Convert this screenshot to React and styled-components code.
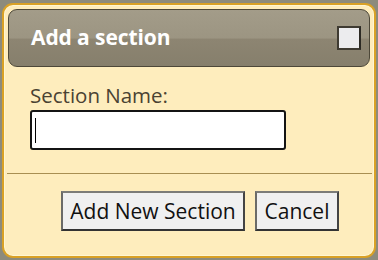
import React from "react";
import styled, { createGlobalStyle } from "styled-components";

const Global = createGlobalStyle`
  html, body { margin: 0; padding: 0; background: #8d8b7c; }
  body { width: 378px; height: 260px; overflow: hidden; font-family: "Open Sans", "Noto Sans", sans-serif; }
  #root { padding: 3px 2px 0 2px; }
`;

const Dialog = styled.div`
  box-sizing: border-box;
  width: 374px;
  height: 255px;
  border: 2px solid #d9a126;
  border-radius: 11px;
  background: #feedbd;
  box-shadow: inset 0 0 0 1px #fff6d2;
  padding: 4px 4px 0 4px;
  display: flex;
  flex-direction: column;
`;

const Header = styled.div`
  box-sizing: border-box;
  height: 58px;
  border: 1px solid #4d4839;
  border-radius: 9px;
  background: linear-gradient(to bottom, #a39c89 0%, #9c9582 50%, #8d8572 52%, #867f6c 100%);
  display: flex;
  align-items: center;
  justify-content: space-between;
  padding: 0 8px 0 22px;
`;

const Title = styled.div`
  color: #ffffff;
  font-weight: 700;
  font-size: 21px;
  letter-spacing: -0.1px;
  margin-top: -2px;
`;

const CloseBox = styled.div`
  box-sizing: border-box;
  width: 24px;
  height: 24px;
  background: #ececee;
  border: 2px solid #3f3b32;
  border-right-color: #2c2a24;
  margin-top: -1px;
`;

const Body = styled.div`
  padding: 15px 0 0 23px;
  display: flex;
  flex-direction: column;
`;

const Label = styled.label`
  color: #4a4232;
  font-size: 20.5px;
  line-height: 27px;
  margin-left: -1px;
`;

const InputBox = styled.div`
  box-sizing: border-box;
  width: 256px;
  height: 40px;
  margin-top: 1px;
  margin-left: -1px;
  border: 2px solid #141414;
  border-radius: 3px;
  background: #ffffff;
  display: flex;
  align-items: center;
  padding-left: 3px;
`;

const Caret = styled.div`
  width: 1px;
  height: 25px;
  background: #000;
`;

const Divider = styled.div`
  height: 1px;
  background: #a88f52;
  margin: 23px -2px 0 -1px;
`;

const Actions = styled.div`
  display: flex;
  gap: 10px;
  padding: 17px 0 0 53px;
`;

const Button = styled.button`
  box-sizing: border-box;
  height: 40px;
  padding: 0 0 1px 0;
  background: #f0f0f0;
  border: 2px solid #6b6b68;
  border-top-color: #7c7c78;
  border-right-color: #444;
  border-bottom-color: #333;
  border-radius: 0;
  font-family: "Open Sans", "Noto Sans", sans-serif;
  font-size: 21px;
  color: #111;
  width: ${(p) => p.$w}px;
`;

export default function App() {
  return (
    <>
      <Global />
      <Dialog>
        <Header>
          <Title>Add a section</Title>
          <CloseBox />
        </Header>
        <Body>
          <Label>Section Name:</Label>
          <InputBox>
            <Caret />
          </InputBox>
        </Body>
        <Divider />
        <Actions>
          <Button $w={184}>Add New Section</Button>
          <Button $w={84}>Cancel</Button>
        </Actions>
      </Dialog>
    </>
  );
}
